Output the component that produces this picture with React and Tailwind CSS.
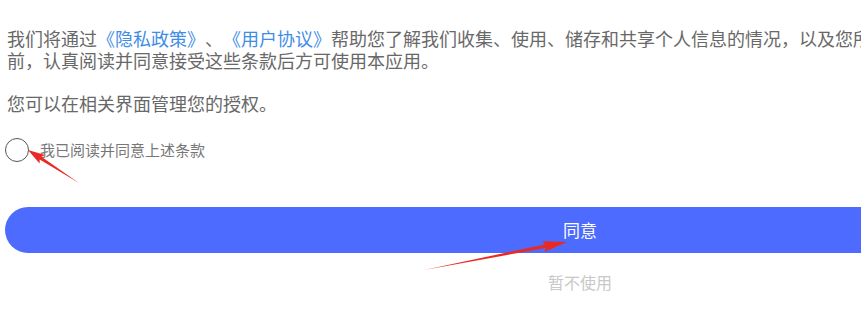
import React from "react";

// red annotation arrow: thin tail, wedge head
const arrowPoints = (tail, tip, headLen, headHalf, shaftHalf) => {
  const dx = tip[0] - tail[0];
  const dy = tip[1] - tail[1];
  const len = Math.hypot(dx, dy);
  const ux = dx / len, uy = dy / len;
  const nx = -uy, ny = ux;
  const bx = tip[0] - ux * headLen, by = tip[1] - uy * headLen;
  const pts = [
    [tail[0], tail[1]],
    [bx + nx * shaftHalf, by + ny * shaftHalf],
    [bx + nx * headHalf - ux * 2, by + ny * headHalf - uy * 2],
    [tip[0], tip[1]],
    [bx - nx * headHalf - ux * 2, by - ny * headHalf - uy * 2],
    [bx - nx * shaftHalf, by - ny * shaftHalf],
  ];
  return pts.map((p) => p.join(",")).join(" ");
};

const Annotations = () => (
  <svg className="absolute inset-0 pointer-events-none" width="861" height="325">
    <polygon points={arrowPoints([79, 183], [28, 150], 15, 5, 1.6)} fill="#ea2a22" />
    <polygon points={arrowPoints([424, 270], [567, 242], 22, 5.5, 1.8)} fill="#ea2a22" />
  </svg>
);

export default function App() {
  return (
    <div
      className="relative w-[861px] h-[325px] overflow-hidden bg-white [text-spacing-trim:space-all]"
      style={{ fontFamily: '"Noto Sans CJK SC", "Noto Sans", sans-serif' }}
    >
      <div className="w-[1160px] px-[5px] pt-[28px]">
        <div className="px-[2px] text-[18px] leading-[21.7px] text-[#686868]">
          <p className="whitespace-nowrap">
            我们将通过<span className="text-[#3f8de6]">《隐私政策》</span>、
            <span className="text-[#3f8de6]">《用户协议》</span>
            帮助您了解我们收集、使用、储存和共享个人信息的情况，以及您所享有的相关权利。在您使用
            <br />
            前，认真阅读并同意接受这些条款后方可使用本应用。
          </p>
          <p className="mt-[21.7px]">您可以在相关界面管理您的授权。</p>
        </div>

        <label className="mt-[23px] flex items-center gap-[11px]">
          <span className="w-[24px] h-[24px] rounded-full border border-[#555555] bg-white" />
          <span className="text-[15px] text-[#777777]">我已阅读并同意上述条款</span>
        </label>

        <button className="mt-[45px] w-full h-[46px] rounded-full bg-[#4d6bfe] text-white text-[17px] flex items-center justify-center">
          同意
        </button>

        <div className="mt-[17px] text-center text-[16px] text-[#c9c9c9]">暂不使用</div>
      </div>
      <Annotations />
    </div>
  );
}
